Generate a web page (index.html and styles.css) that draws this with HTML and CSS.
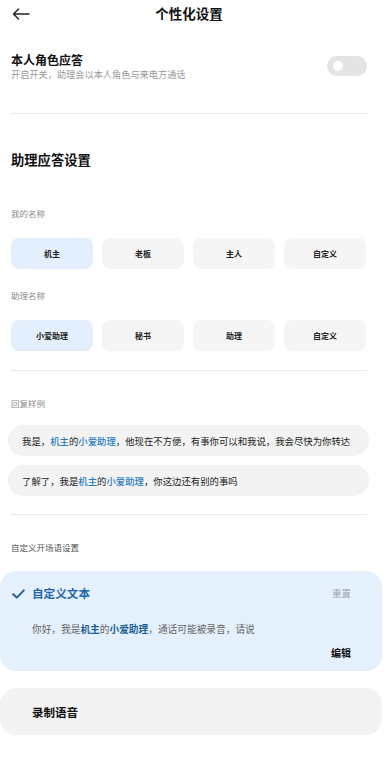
FILE: index.html
```html
<!DOCTYPE html>
<html lang="zh">
<head>
<meta charset="utf-8">
<link rel="stylesheet" href="styles.css">
</head>
<body>
<div class="page">
  <header class="topbar">
    <span class="back">
      <svg width="18" height="12" viewBox="0 0 18 12"><path d="M17 6H1.5M6.5 1L1.5 6l5 5" fill="none" stroke="#222" stroke-width="1.4" stroke-linecap="round" stroke-linejoin="round"/></svg>
    </span>
    <h1 class="title">个性化设置</h1>
    <span></span>
  </header>

  <div class="content">
    <div class="toggle-row">
      <div class="toggle-text">
        <div class="toggle-title">本人角色应答</div>
        <div class="toggle-sub">开启开关，助理会以本人角色与来电方通话</div>
      </div>
      <div class="switch"><span class="knob"></span></div>
    </div>
    <div class="divider d1"></div>

    <h2 class="section-title">助理应答设置</h2>

    <div class="label l1">我的名称</div>
    <div class="chips">
      <div class="chip active">机主</div>
      <div class="chip">老板</div>
      <div class="chip">主人</div>
      <div class="chip">自定义</div>
    </div>

    <div class="label l2">助理名称</div>
    <div class="chips">
      <div class="chip active">小爱助理</div>
      <div class="chip">秘书</div>
      <div class="chip">助理</div>
      <div class="chip">自定义</div>
    </div>
    <div class="divider d2"></div>

    <div class="label l3">回复样例</div>
    <div class="bubbles">
      <div class="bubble">我是，<span class="hl">机主</span>的<span class="hl">小爱助理</span>，他现在不方便，有事你可以和我说，我会尽快为你转达</div>
      <div class="bubble">了解了，我是<span class="hl">机主</span>的<span class="hl">小爱助理</span>，你这边还有别的事吗</div>
    </div>
    <div class="divider d3"></div>

    <div class="label l4 dark">自定义开场语设置</div>

    <div class="card selected">
      <div class="card-head">
        <svg class="check" width="13" height="10" viewBox="0 0 13 10"><path d="M1.2 5.2l3.6 3.4L11.8 1.4" fill="none" stroke="#2a5f92" stroke-width="2" stroke-linecap="round" stroke-linejoin="round"/></svg>
        <span class="card-title">自定义文本</span>
        <span class="reset">重置</span>
      </div>
      <div class="card-body">你好，我是<span class="hl2">机主</span>的<span class="hl2">小爱助理</span>，通话可能被录音，请说</div>
      <div class="card-foot"><span class="edit">编辑</span></div>
    </div>

    <div class="card plain">
      <span class="plain-title">录制语音</span>
    </div>
  </div>
</div>
</body>
</html>
```
FILE: styles.css
```css
* { box-sizing: border-box; margin: 0; padding: 0; }
html, body { background: #fff; }
body {
  font-family: "Noto Sans CJK SC", "Noto Sans", sans-serif;
  color: #111;
  width: 390px;
  height: 757px;
  overflow: hidden;
}
.topbar {
  height: 27px;
  display: grid;
  grid-template-columns: 1fr auto 1fr;
  align-items: center;
}
.back { padding-left: 12px; display: flex; align-items: center; height: 27px; }
.title { font-size: 13.5px; font-weight: 700; line-height: 27px; margin-left: -12px; }
.content { padding-left: 11px; width: 368px; }

.toggle-row {
  margin-top: 25px;
  display: flex;
  align-items: center;
  justify-content: space-between;
}
.toggle-title { font-size: 12px; font-weight: 700; line-height: 16px; }
.toggle-sub { font-size: 9.2px; color: #999; line-height: 12px; margin-top: 0; }
.switch {
  width: 40px; height: 20px; border-radius: 10px;
  background: #e4e4e4; margin-right: 1px;
  display: flex; align-items: center; padding-left: 6px;
}
.knob { width: 10px; height: 10px; border-radius: 50%; background: #fff; }

.divider { height: 1px; background: #e8e8e8; width: 357px; margin-left: -1px; }
.d1 { margin-top: 33px; }
.section-title { font-size: 13.3px; font-weight: 700; line-height: 18px; margin-top: 37px; }
.label { font-size: 8.5px; color: #8a8a8a; line-height: 12px; }
.label.dark { color: #555; }
.l1 { margin-top: 38px; }
.l2 { margin-top: 20px; }
.l3 { margin-top: 26px; }
.l4 { margin-top: 26px; }

.chips {
  margin-top: 19px;
  display: grid;
  grid-template-columns: repeat(4, 82px);
  column-gap: 9px;
}
.chip {
  height: 31px; border-radius: 8px; background: #f5f5f5;
  display: flex; align-items: center; justify-content: center;
  font-size: 8px; font-weight: 700; color: #222;
}
.chip.active { background: #e3effc; }
.d2 { margin-top: 19px; }

.bubbles { margin-top: 16px; margin-left: -3px; display: flex; flex-direction: column; gap: 9px; }
.bubble {
  width: 361px; height: 31px; border-radius: 15px; background: #f3f3f3;
  display: flex; align-items: center; padding-left: 14px;
  font-size: 9.4px; color: #222; white-space: nowrap;
}
.hl { color: #2a7dc0; font-weight: 500; }
.d3 { margin-top: 18px; }

.card { margin-left: -11px; width: 382px; border-radius: 16px; }
.selected { margin-top: 18px; background: #e4f0fb; height: 100px; padding: 15px 0 0 12px; }
.card-head { display: flex; align-items: center; height: 14px; }
.check { margin-top: 1px; }
.card-title { font-size: 11.6px; font-weight: 700; color: #2366a6; margin-left: 7px; line-height: 14px; }
.reset { margin-left: auto; margin-right: 31px; font-size: 9.5px; color: #a0a6ad; }
.card-body { margin-top: 22px; padding-left: 20px; font-size: 9.7px; color: #666; line-height: 14px; white-space: nowrap; }
.hl2 { color: #1e5f96; font-weight: 700; }
.card-foot { display: flex; justify-content: flex-end; padding-right: 31px; margin-top: 10px; }
.edit { font-size: 10px; font-weight: 700; color: #111; line-height: 14px; }

.plain { margin-top: 17px; background: #f3f3f3; height: 47px; display: flex; align-items: center; padding-left: 32px; }
.plain-title { font-size: 11.5px; font-weight: 700; color: #111; }
```
